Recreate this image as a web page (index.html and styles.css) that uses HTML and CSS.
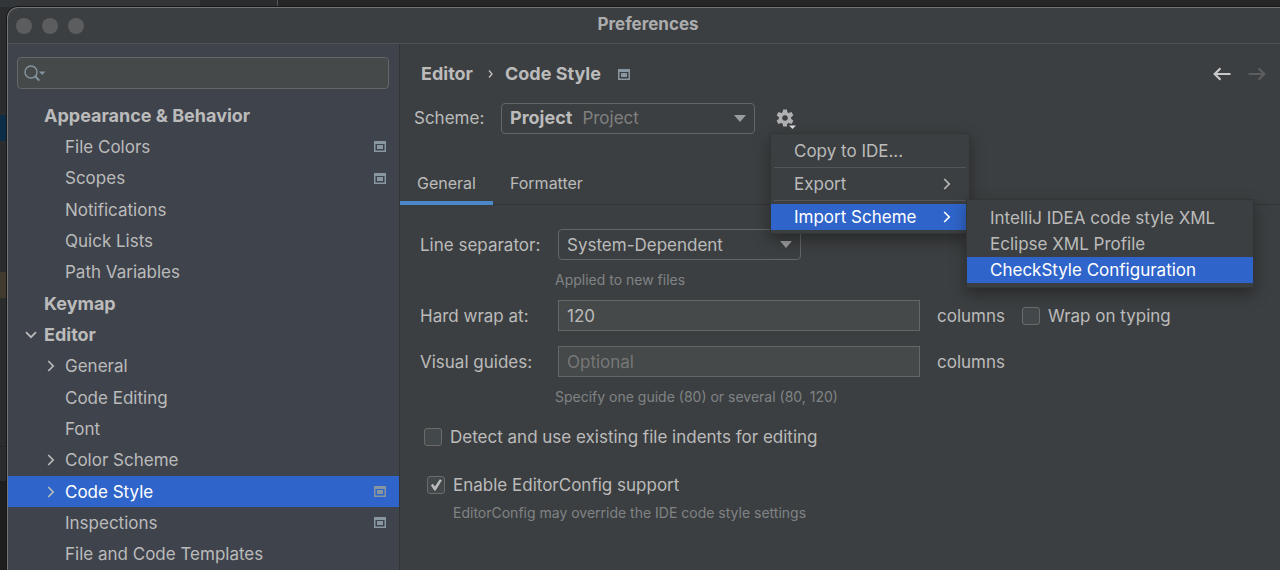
FILE: index.html
```html
<!DOCTYPE html>
<html lang="en">
<head>
<meta charset="utf-8">
<title>Preferences</title>
<link rel="stylesheet" href="styles.css">
</head>
<body>
<svg class="defs" width="0" height="0" aria-hidden="true">
  <symbol id="project" viewBox="0 0 12 11"><path fill-rule="evenodd" d="M0 0h12v11H0zM1.500 3v6.500h9V3z"/><path d="M3 4h6v4H3z"/></symbol>
  <symbol id="right" viewBox="0 0 8 12"><path d="M1.200 1l5 5-5 5"/></symbol>
  <symbol id="down" viewBox="0 0 12 8"><path d="M1 1.200l5 5 5-5"/></symbol>
  <symbol id="triangle" viewBox="0 0 12 7"><path d="M0 0h12L6 7z"/></symbol>
</svg>
<div class="window">
  <header class="titlebar">
    <span class="lights"><i class="light"></i><i class="light"></i><i class="light"></i></span>
    <h1 class="title">Preferences</h1>
  </header>
  <div class="content">
    <aside class="sidebar">
      <label class="search">
        <svg class="search-icon" width="22" height="17" viewBox="0 0 22 17" aria-hidden="true"><circle cx="7" cy="7" r="6" fill="none" stroke="currentColor" stroke-width="1.4"/><path d="M11 11l4.200 4.600" fill="none" stroke="currentColor" stroke-width="2"/><path d="M15 6.500h6.400L18.200 10z" fill="currentColor"/></svg>
        <input class="search-input" type="text" aria-label="Search settings">
      </label>
      <nav class="tree" aria-label="Settings">
        <button class="node group">Appearance &amp; Behavior</button>
        <button class="node">File Colors<svg class="badge"><use href="#project"/></svg></button>
        <button class="node">Scopes<svg class="badge"><use href="#project"/></svg></button>
        <button class="node">Notifications</button>
        <button class="node">Quick Lists</button>
        <button class="node">Path Variables</button>
        <button class="node group">Keymap</button>
        <button class="node group opened" aria-expanded="true"><svg class="chevron-down"><use href="#down"/></svg>Editor</button>
        <button class="node closed" aria-expanded="false"><svg class="chevron"><use href="#right"/></svg>General</button>
        <button class="node">Code Editing</button>
        <button class="node">Font</button>
        <button class="node closed" aria-expanded="false"><svg class="chevron"><use href="#right"/></svg>Color Scheme</button>
        <button class="node closed selected" aria-expanded="false"><svg class="chevron"><use href="#right"/></svg>Code Style<svg class="badge"><use href="#project"/></svg></button>
        <button class="node">Inspections<svg class="badge"><use href="#project"/></svg></button>
        <button class="node">File and Code Templates</button>
      </nav>
    </aside>
    <main class="main">
      <div class="crumbs">
        <span>Editor</span>
        <svg class="crumb-sep" viewBox="0 0 5 8"><path d="M1 .5l3 3.500-3 3.500"/></svg>
        <span>Code Style</span>
        <svg class="crumb-badge"><use href="#project"/></svg>
        <span class="history">
          <button class="arrow" aria-label="Back"><svg width="18" height="14" viewBox="0 0 18 14"><path d="M17.500 7H2M7.500 1.200L1.700 7l5.800 5.800"/></svg></button>
          <button class="arrow" aria-label="Forward" disabled><svg width="18" height="14" viewBox="0 0 18 14"><path d="M.5 7H16M10.500 1.200L16.300 7l-5.800 5.800"/></svg></button>
        </span>
      </div>
      <div class="scheme">
        <label class="scheme-label" for="scheme">Scheme:</label>
        <div class="combo scheme-combo">
          <b class="scheme-name">Project</b><span class="muted">Project</span>
          <select class="scheme-select" id="scheme"><option>Project</option></select>
          <svg class="triangle"><use href="#triangle"/></svg>
        </div>
        <div class="actions">
          <button class="gear" aria-label="Scheme actions" aria-haspopup="menu">
            <svg width="20" height="20" viewBox="0 0 20 20"><g fill="currentColor"><path fill-rule="evenodd" d="M9 2.800a6.200 6.200 0 1 0 .01 0zM9 6.200a2.800 2.800 0 1 1-.01 0z"/><path id="tooth" d="M7.100.4h3.800l.7 3.800H6.400z"/><use href="#tooth" transform="rotate(60 9 9)"/><use href="#tooth" transform="rotate(120 9 9)"/><use href="#tooth" transform="rotate(180 9 9)"/><use href="#tooth" transform="rotate(240 9 9)"/><use href="#tooth" transform="rotate(300 9 9)"/></g><path d="M12.500 16h7.500l-3.700 4z" fill="#3c3f41" stroke="#3c3f41" stroke-width="1.500"/><path d="M13 16.500h7L16.500 20z" fill="#dddddd"/></svg>
          </button>
          <div class="menu" role="menu">
            <button class="item" role="menuitem">Copy to IDE...</button>
            <hr class="separator">
            <button class="item" role="menuitem">Export<svg class="chevron"><use href="#right"/></svg></button>
            <hr class="separator">
            <button class="item active" role="menuitem">Import Scheme<svg class="chevron"><use href="#right"/></svg></button>
            <div class="menu submenu" role="menu">
              <button class="item" role="menuitem">IntelliJ IDEA code style XML</button>
              <button class="item" role="menuitem">Eclipse XML Profile</button>
              <button class="item active" role="menuitem">CheckStyle Configuration</button>
            </div>
          </div>
        </div>
      </div>
      <div class="tabs" role="tablist">
        <button class="tab current" role="tab" aria-selected="true">General</button>
        <button class="tab" role="tab" aria-selected="false">Formatter</button>
      </div>
      <form class="form">
        <div class="fields">
          <label for="separator">Line separator:</label>
          <div class="control">
            <div class="select-wrap">
              <select class="combo line-select" id="separator"><option>System-Dependent</option></select>
              <svg class="triangle"><use href="#triangle"/></svg>
            </div>
          </div>
          <p class="hint field-hint">Applied to new files</p>
          <label for="wrap">Hard wrap at:</label>
          <div class="control"><input class="text" id="wrap" type="text" value="120"></div>
          <div class="suffix"><span>columns</span><label class="check"><input class="box" type="checkbox">Wrap on typing</label></div>
          <label class="guides" for="guides">Visual guides:</label>
          <div class="control guides"><input class="text" id="guides" type="text" placeholder="Optional"></div>
          <div class="suffix guides"><span>columns</span></div>
          <p class="hint field-hint">Specify one guide (80) or several (80, 120)</p>
        </div>
        <label class="check detect"><input class="box" type="checkbox">Detect and use existing file indents for editing</label>
        <div class="editorconfig">
          <label class="check"><input class="box" type="checkbox" checked>Enable EditorConfig support</label>
          <p class="hint config-hint">EditorConfig may override the IDE code style settings</p>
        </div>
      </form>
    </main>
  </div>
</div>
</body>
</html>
```

FILE: styles.css
```css
* { box-sizing: border-box; }

body {
  margin: 0;
  min-height: 100vh;
  padding: 7px 0 0 7px;
  overflow: hidden;
  color: #bbbbbb;
  font: 17px/20px Inter, "Liberation Sans", sans-serif;
  background:
    linear-gradient(#0b2d48, #0b2d48) 0 115px / 7px 26px no-repeat,
    linear-gradient(#403b2d, #403b2d) 0 272px / 7px 26px no-repeat,
    linear-gradient(#242424, #242424) 0 446px / 7px 1px no-repeat,
    linear-gradient(#1e1e1e, #1e1e1e) 0 481px / 7px 100% no-repeat,
    linear-gradient(90deg, #333638 200px, #2b2c2e 200px 277px, #555555 277px 278px, #262626 278px) 0 0 / 100% 7px no-repeat,
    #2b2c2d;
}

button, input, select { font: inherit; color: inherit; }
button { border: 0; padding: 0; background: none; text-align: left; }
p { margin: 0; }
.defs { position: absolute; }

.window {
  display: flex;
  flex-direction: column;
  min-height: calc(100vh - 7px);
  border: 1px solid #737577;
  border-width: 1px 0 0 1px;
  border-radius: 11px 0 0 0;
  background: #3c3f41;
  box-shadow: 0 0 0 1px #171717;
  overflow: hidden;
}

.titlebar {
  display: flex;
  align-items: center;
  height: 36px;
  padding-left: 8px;
  border-bottom: 1px solid #515151;
}
.lights { display: flex; gap: 10px; flex: 1; }
.light { width: 16px; height: 16px; border-radius: 50%; background: #5c5d5e; }
.title { margin: 0; padding-bottom: 4px; font-size: 17px; line-height: 20px; color: #acadae; }
.titlebar::after { content: ""; flex: 1; }

.content { display: flex; flex: 1; }

.sidebar {
  display: flex;
  flex-direction: column;
  flex: 0 0 392px;
  border-right: 1px solid #323435;
  background: #3f434c;
}
.search {
  display: flex;
  align-items: center;
  height: 32px;
  margin: 13px 10px 11px 9px;
  padding-left: 6px;
  border: 1px solid #646668;
  border-radius: 4px;
  background: #45494a;
}
.search-icon { color: #8495a0; }
.search-input { flex: 1; min-width: 0; border: 0; background: none; outline: 0; }

.tree { display: grid; flex: 1; grid-auto-rows: minmax(31px, 1fr); }
.node { display: flex; align-items: center; padding: 0 13px 0 57px; }
.group { padding-left: 36px; font-size: 18px; font-weight: 700; }
.opened { padding-left: 17px; }
.closed { padding-left: 39px; }
.selected { background: #2f65ca; color: #ffffff; }
.badge, .crumb-badge { width: 12px; height: 11px; margin-left: auto; fill: #8796a0; }
.chevron { width: 8px; height: 12px; margin-right: 10px; fill: none; stroke: #bbbbbb; stroke-width: 1.7; }
.chevron-down { width: 12px; height: 8px; margin-right: 7px; fill: none; stroke: #bbbbbb; stroke-width: 1.7; }

.main { flex: 1; min-width: 0; }
.crumbs {
  display: flex;
  align-items: center;
  height: 30px;
  margin-top: 15px;
  padding: 0 14px 0 21px;
  font-size: 18px;
  font-weight: 700;
}
.crumb-sep { width: 5px; height: 8px; margin: 0 12px 0 15px; fill: none; stroke: #bbbbbb; stroke-width: 1.4; }
.crumb-badge { margin-left: 17px; }
.history { display: flex; gap: 17px; margin-left: auto; }
.arrow { display: flex; fill: none; stroke: #c8c8c8; stroke-width: 2.2; }
.arrow:disabled { stroke: #5b5d5f; }

.scheme { display: flex; align-items: center; height: 32px; margin-top: 13px; padding-left: 14px; }
.scheme-label { flex: 0 0 87px; }
.combo {
  display: flex;
  align-items: center;
  position: relative;
  height: 31px;
  border: 1px solid #646668;
  border-radius: 4px;
  background: #3c3f41;
}
.scheme-combo { flex: 0 1 254px; padding: 0 8px; gap: 10px; }
.scheme-name { font-size: 18px; }
.muted { color: #808080; }
.scheme-select { position: absolute; inset: 0; width: 100%; opacity: 0; }
.triangle { width: 12px; height: 7px; margin-left: auto; fill: #9a9da0; pointer-events: none; }
.actions { position: relative; margin-left: 21px; }
.gear { display: flex; padding-top: 2px; color: #afb1b3; }

.menu {
  position: absolute;
  z-index: 2;
  top: 26px;
  left: -6px;
  width: 200px;
  padding: 4px 0 3px;
  border: 1px solid #333637;
  background: #3c3f41;
  box-shadow: 0 6px 14px rgba(0, 0, 0, .35);
}
.item { display: flex; align-items: center; width: 100%; height: 26px; padding-left: 23px; white-space: nowrap; }
.item .chevron { margin: 0 18px 0 auto; }
.item.active { background: #2f65ca; color: #ffffff; }
.item.active .chevron { stroke: #ffffff; }
.separator { height: 1px; margin: 3px; border: 0; background: #555555; }
.submenu { top: 65px; left: 195px; width: 288px; padding: 5px 0 4px; }

.tabs { display: flex; margin-top: 28px; border-bottom: 1px solid #323435; font-size: 16px; }
.tab { height: 43px; margin-bottom: -1px; padding: 3px 17px 0; border-bottom: 4px solid transparent; }
.current { border-color: #4a88c7; }

.form { padding: 24px 0 0 20px; }
.fields {
  display: grid;
  grid-template-columns: 135px minmax(0, 365px) auto;
  justify-content: start;
  align-items: center;
}
.control { padding-left: 3px; }
.select-wrap { display: flex; align-items: center; max-width: 243px; }
.line-select { appearance: none; width: 100%; padding: 0 8px; outline: 0; }
.select-wrap .triangle { flex: none; position: relative; margin-left: -21px; }
.text { display: block; width: 100%; height: 31px; padding: 0 8px; border: 1px solid #646668; background: #45494a; outline: 0; }
.text::placeholder { color: #777777; opacity: 1; }
.suffix { display: flex; align-items: center; gap: 17px; padding-left: 17px; }
.hint { color: #808385; font-size: 14px; line-height: 20px; }
.field-hint { grid-column: 2 / -1; margin: 10px 0; }
.guides { margin-top: 15px; }
.check { display: flex; align-items: center; gap: 8px; }
.box {
  appearance: none;
  display: grid;
  width: 18px;
  height: 18px;
  margin: 0;
  border: 1px solid #6b6b6b;
  border-radius: 3px;
  background: #43494a;
}
.box:checked::before {
  content: "";
  background: #bbbbbb;
  clip-path: polygon(18% 52%, 30% 42%, 43% 60%, 74% 14%, 87% 20%, 48% 84%, 39% 84%);
}
.detect { margin: 10px 0 0 4px; }
.editorconfig { margin: 28px 0 0 7px; }
.config-hint { margin: 8px 0 0 26px; }
```
